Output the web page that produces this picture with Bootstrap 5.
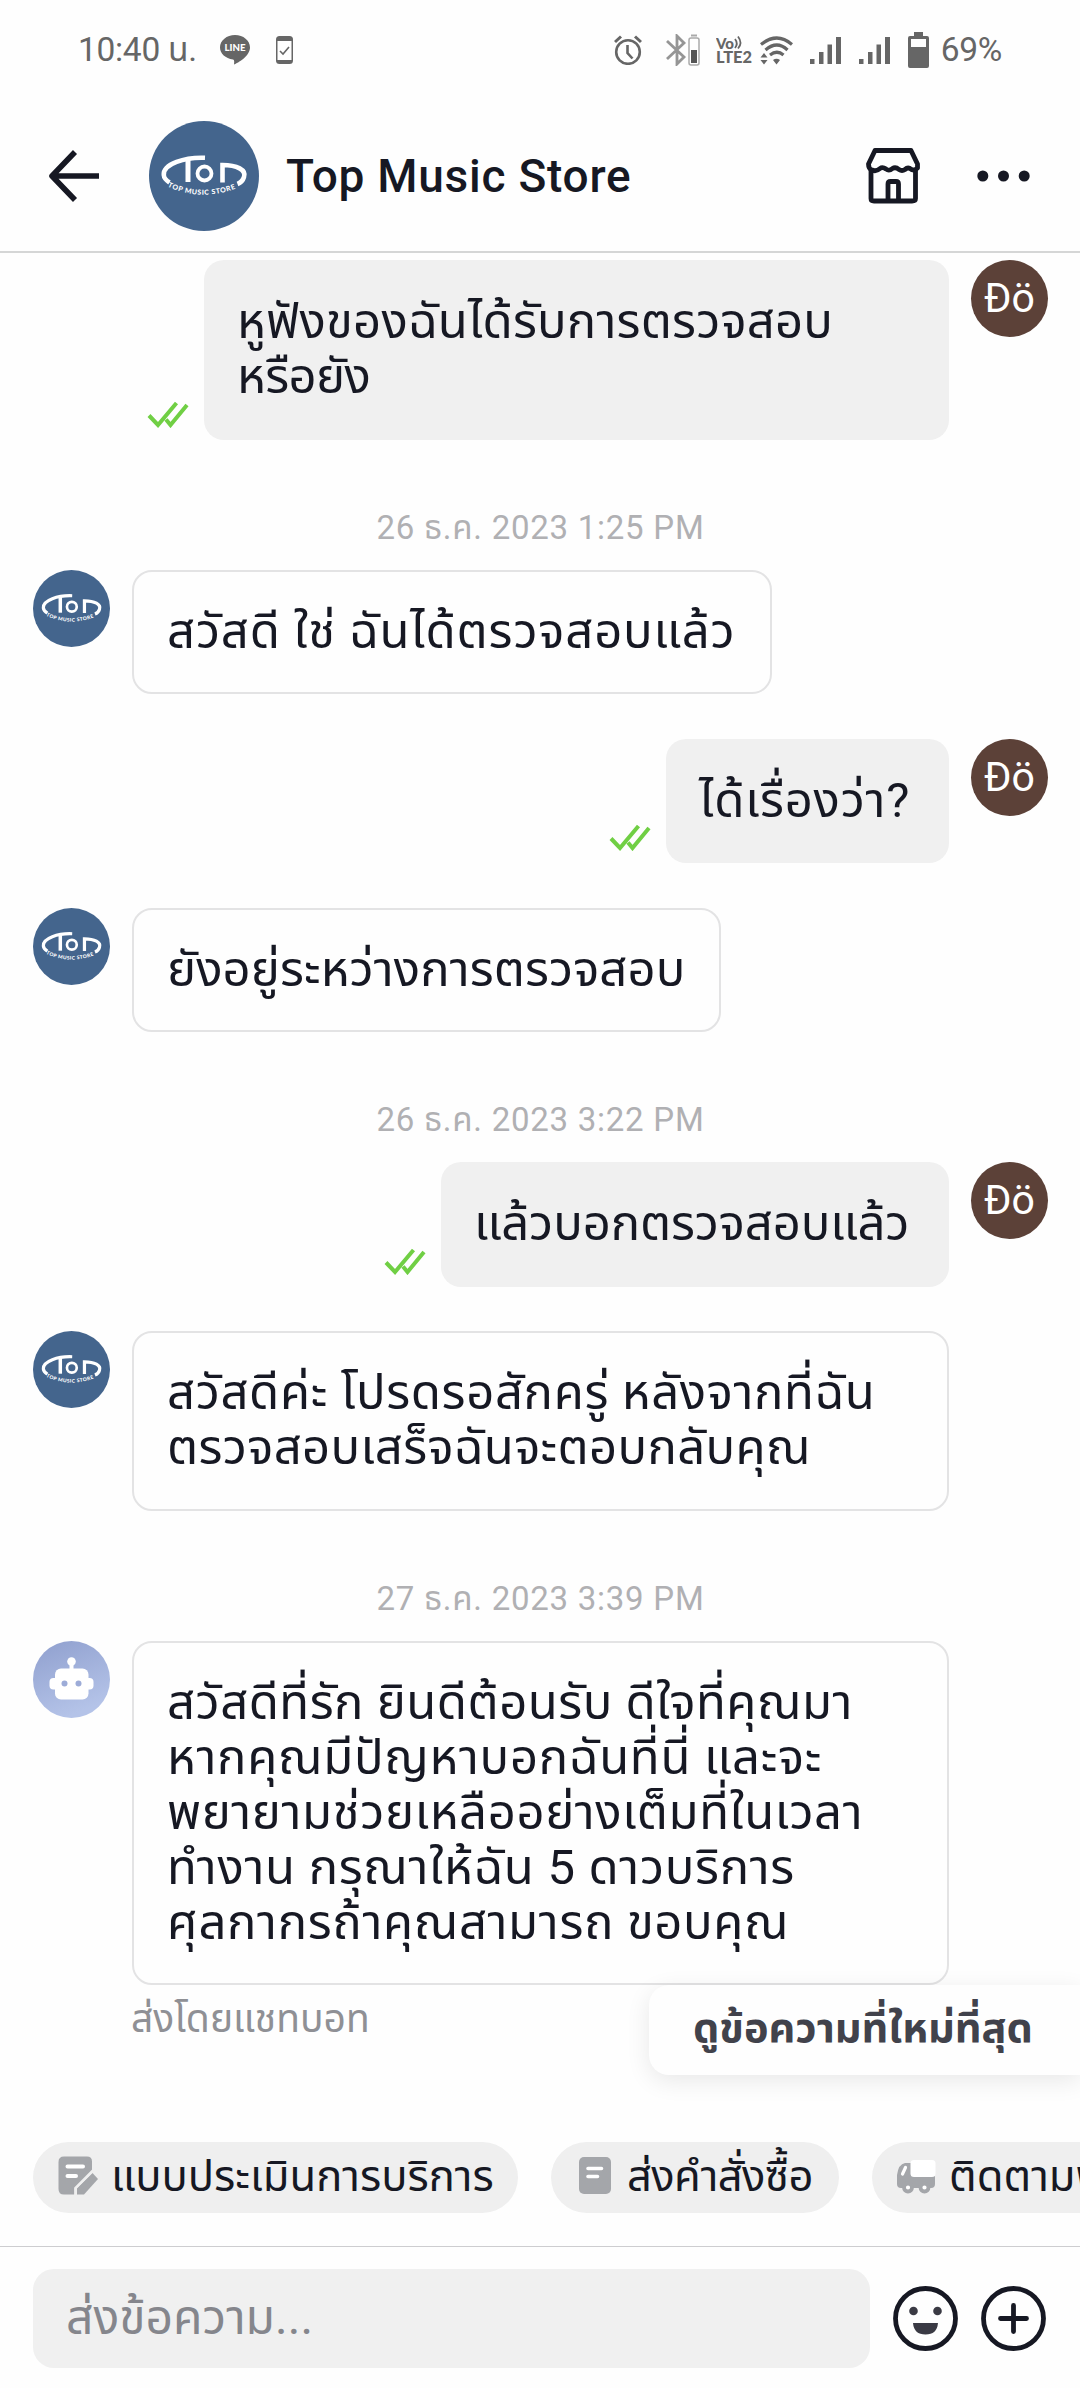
<!DOCTYPE html>
<html lang="th">
<head>
<meta charset="utf-8">
<meta name="viewport" content="width=device-width, initial-scale=1">
<title>Top Music Store</title>
<link href="https://cdn.jsdelivr.net/npm/bootstrap@5.3.0/dist/css/bootstrap.min.css" rel="stylesheet">
<style>
body{font-family:Roboto,"Noto Sans","Noto Sans Thai",sans-serif;color:#161823;background:#fefefe;width:1080px;height:2388px;overflow:hidden}
svg{display:block;flex:none}
.statusbar{height:100px;padding:0 78px;color:#666;font-size:33.5px}
.clock{line-height:40px;letter-spacing:-.3px}
.chat-head{height:153px;padding:0 50px 0 49px;border-bottom:2px solid #d5d6d6}
.shop-name{font-size:46px;font-weight:500;line-height:60px;letter-spacing:.75px}
.thread{padding:7px 32px 0 33px;height:1855px}
.msg{margin-bottom:44.5px}
.bubble{border-radius:20px;padding:34px 33px 35.5px 33px;font-size:49px;line-height:55px}
.bubble.theirs{border:2px solid #e3e3e4;padding:32px 31px 33.500px 33px;margin-left:22px;background:#fefefe}
.bubble.mine{background:#f0f0f0;margin-right:22px}
.wide{width:817px}
.seen{margin:0 15px 12px 0}
.ln{display:block;width:max-content;white-space:nowrap}
.ava-me{width:77px;height:77px;background:#5c4138;color:#fff;font-size:41px;line-height:77px}
.stamp{color:#b0b0b3;font-size:33px;line-height:44px;letter-spacing:.75px;margin-top:66px;margin-bottom:20px}
.botnote{color:#8f9095;font-size:39px;line-height:44px;margin:12px 0 0 98px}
.newest{right:0;top:1985px;width:431px;height:90px;border-radius:20px 0 0 20px;background:#fefefe;color:#41424b;font-size:41.500px;font-weight:700;line-height:86px;padding-left:44px;box-shadow:0 6px 24px rgba(0,0,0,.09)}
.quick{height:139px;padding:34px 0 0 33px;gap:33px;border-bottom:1px solid #cdcdd0;overflow:hidden}
.chip{height:71px;border-radius:36px;background:#efefef;font-size:43.500px;line-height:69px;padding:0 22px 0 25px;flex:none}
.chip svg{margin:14px 13px 0 0}
.composer{padding:22px 33px 0 33px}
.field{width:839px;height:99px;border-radius:21px;background:#f0f0f0;color:#85868c;font-size:48px;line-height:98px;padding-left:33px}
</style>
</head>
<body class="d-flex flex-column position-relative">
<svg width="0" height="0" class="position-absolute">
<defs>
<path id="logoArc" d="M18.500 65.500 Q54 82 92 65.500"/>
<symbol id="logo" viewBox="0 0 110 110">
<circle cx="55" cy="55" r="55" fill="#44658d"/>
<g fill="none" stroke="#fff" stroke-width="4.600">
<path d="M56 36.800 C36 36 14 43 14.800 54 Q15 58 20.500 61.500"/><path d="M39 38 V61" stroke-width="5"/>
<circle cx="55.500" cy="52.500" r="7" stroke-width="3.800"/>
<path d="M73.500 61.500 V44 C88 44 97.500 49 95 56 Q93.500 61 88.500 63"/>
</g>
<text font-family="Lato" font-weight="900" font-size="7" fill="#fff"><textPath href="#logoArc" textLength="70">TOP MUSIC STORE</textPath></text>
</symbol>
<symbol id="ticks" viewBox="0 0 42 27"><path d="M2 14.500 L11 24 L29.500 2 M19 18.500 L23.500 24 L40 4" fill="none" stroke="#70cf44" stroke-width="4"/></symbol>
<symbol id="bars" viewBox="0 0 31 28"><path d="M0 23h4.500v5H0zM9 16h4.500v12H9zM17.500 8.500h4.500v19.500h-4.500zM26 1h5v27h-5z" fill="#666"/></symbol>
</defs>
</svg>

<div class="statusbar d-flex align-items-center">
  <span class="clock ln">10:40 น.</span>
  <svg style="margin-left:23px" width="30" height="30" viewBox="0 0 30 30"><path d="M15 0C6.700 0 0 5.500 0 12.500 0 18.500 5.500 23.500 13 24.600 14.500 25 14.300 27 14 29.500 18 28 30 21 30 12.500 30 5.500 23.300 0 15 0z" fill="#666"/><text x="4.500" y="16.200" font-family="Lato" font-weight="900" font-size="9.500" fill="#fff" textLength="21" lengthAdjust="spacingAndGlyphs">LINE</text></svg>
  <svg style="margin-left:26px" width="17" height="28" viewBox="0 0 17 28"><rect width="17" height="28" rx="3.500" fill="#666"/><rect x="1.500" y="5" width="14" height="19" fill="#fefefe"/><path d="M4 15l3 3 6-7" fill="none" stroke="#666" stroke-width="1.600"/></svg>
  <div class="d-flex align-items-center ms-auto">
  <svg width="28" height="30" viewBox="0 0 28 30"><g fill="none" stroke="#666" stroke-width="2.600"><circle cx="14" cy="17" r="11.800"/><path d="M1 7l6-5.500M27 7l-6-5.500" stroke-width="3"/><path d="M13.500 10v8l5 5.500"/></g></svg>
  <svg style="margin-left:24px" width="34" height="32" viewBox="0 0 34 32"><path d="M1 7l17 16-7 7V2l7 7L1 25" fill="none" stroke="#959595" stroke-width="2.800"/><rect x="23" y="4" width="10" height="27" rx="2" fill="none" stroke="#aaa" stroke-width="1.500"/><path d="M25 1.500h6" stroke="#aaa" stroke-width="2"/><path d="M25 16h6v13h-6z" fill="#555"/></svg>
  <svg style="margin-left:16px" width="37" height="32" viewBox="0 0 37 32" fill="#666" font-family="Lato" font-weight="900"><text x="0" y="14.500" font-size="15.500" textLength="18" lengthAdjust="spacingAndGlyphs">Vo</text><path d="M19 5q3.500 4.500 0 9M22 2.500q5 6.500 0 12" fill="none" stroke="#666" stroke-width="1.800"/><text x="0" y="29" font-size="16" textLength="36" lengthAdjust="spacingAndGlyphs">LTE2</text></svg>
  <svg style="margin-left:7px" width="33" height="29" viewBox="0 0 33 29"><g fill="none" stroke="#666" stroke-width="3.200"><path d="M1 8.500Q17-4.500 32 8.500M5.500 14Q17 4 27.500 14M10 19Q17 13.500 23.500 19"/></g><path d="M13 24q3.500-2.500 7 0L16.500 28.500zM0.500 21.500L4 17l3.500 4.500zM0.500 24h7L4 28.500z" fill="#666"/></svg>
  <svg style="margin-left:17px" width="31" height="28"><use href="#bars"/></svg>
  <svg style="margin-left:18px" width="31" height="28"><use href="#bars"/></svg>
  <svg style="margin-left:18px" width="21" height="36" viewBox="0 0 21 36"><path d="M6 0h9v4h4q2 0 2 2v28q0 2-2 2H2q-2 0-2-2V6q0-2 2-2h4z" fill="#666"/><path d="M3 7h15v8H3z" fill="#fefefe"/></svg>
  <span class="clock ln" style="margin-left:12px">69%</span>
  </div>
</div>

<header class="chat-head d-flex align-items-center">
  <svg width="50" height="52" viewBox="0 0 50 52"><path d="M26 2L3 26l23 24M3 26h47" fill="none" stroke="#161823" stroke-width="5.600" stroke-linejoin="round"/></svg>
  <svg style="margin-left:50px" width="110" height="110"><use href="#logo"/></svg>
  <span class="shop-name ln" style="margin-left:27px">Top Music Store</span>
  <svg class="ms-auto" width="54" height="56" viewBox="0 0 54 56"><g fill="none" stroke="#161823" stroke-width="4.800" stroke-linejoin="round"><path d="M9 2.500H45L51.500 16V20Q49 23 45.500 21.500 42 18.500 39 21.500 36 23.500 33 21.500 29.500 18.500 26.500 20.500 23 23.500 20 21 16.500 18.500 14 20.500 10 24 6 22 2.500 21 2.500 16z"/><path d="M5 22V50.500Q5 53 8 53H46Q49.500 53 49.500 50.500V22M22 53V36Q22 33.500 24.500 33.500H30Q32.500 33.500 32.500 36V53"/></g></svg>
  <svg style="margin-left:57px" width="53" height="12" viewBox="0 0 53 12" fill="#161823"><circle cx="5.800" cy="6" r="5.500"/><circle cx="26.500" cy="6" r="5.500"/><circle cx="47.200" cy="6" r="5.500"/></svg>
</header>

<main class="thread">
  <div class="msg d-flex justify-content-end align-items-end">
    <svg class="seen" width="42" height="27"><use href="#ticks"/></svg>
    <div class="bubble mine" style="width:745px"><span class="ln" style="letter-spacing:.2px">หูฟังของฉันได้รับการตรวจสอบ</span><span class="ln" style="letter-spacing:-.6px">หรือยัง</span></div>
    <div class="ava-me rounded-circle text-center align-self-start">Đö</div>
  </div>
  <div class="stamp d-flex justify-content-center"><span class="ln">26 ธ.ค. 2023 1:25 PM</span></div>
  <div class="msg d-flex align-items-start">
    <svg width="77" height="77"><use href="#logo"/></svg>
    <div class="bubble theirs" style="width:640px"><span class="ln" style="letter-spacing:.85px">สวัสดี ใช่ ฉันได้ตรวจสอบแล้ว</span></div>
  </div>
  <div class="msg d-flex justify-content-end align-items-end">
    <svg class="seen" width="42" height="27"><use href="#ticks"/></svg>
    <div class="bubble mine" style="width:283px"><span class="ln" style="letter-spacing:.8px">ได้เรื่องว่า?</span></div>
    <div class="ava-me rounded-circle text-center align-self-start">Đö</div>
  </div>
  <div class="msg d-flex align-items-start">
    <svg width="77" height="77"><use href="#logo"/></svg>
    <div class="bubble theirs" style="width:589px"><span class="ln" style="letter-spacing:.1px">ยังอยู่ระหว่างการตรวจสอบ</span></div>
  </div>
  <div class="stamp d-flex justify-content-center"><span class="ln">26 ธ.ค. 2023 3:22 PM</span></div>
  <div class="msg d-flex justify-content-end align-items-end">
    <svg class="seen" width="42" height="27"><use href="#ticks"/></svg>
    <div class="bubble mine" style="width:508px"><span class="ln" style="letter-spacing:-.1px">แล้วบอกตรวจสอบแล้ว</span></div>
    <div class="ava-me rounded-circle text-center align-self-start">Đö</div>
  </div>
  <div class="msg d-flex align-items-start">
    <svg width="77" height="77"><use href="#logo"/></svg>
    <div class="bubble theirs wide"><span class="ln" style="letter-spacing:.65px">สวัสดีค่ะ โปรดรอสักครู่ หลังจากที่ฉัน</span><span class="ln" style="letter-spacing:.35px">ตรวจสอบเสร็จฉันจะตอบกลับคุณ</span></div>
  </div>
  <div class="stamp d-flex justify-content-center"><span class="ln">27 ธ.ค. 2023 3:39 PM</span></div>
  <div class="msg d-flex align-items-start mb-0">
    <svg width="77" height="77" viewBox="0 0 77 77"><defs><linearGradient id="bot" x1="0" y1="0" x2=".4" y2="1"><stop stop-color="#8f9fce"/><stop offset="1" stop-color="#b4c3e8"/></linearGradient></defs><circle cx="38.500" cy="38.500" r="38.500" fill="url(#bot)"/><g fill="#fff"><circle cx="38.500" cy="20.500" r="4.300"/><rect x="36.500" y="21" width="4" height="10"/><rect x="22" y="27.500" width="33.500" height="31" rx="6"/><rect x="16.500" y="37" width="44" height="11.500" rx="4"/></g><circle cx="31.500" cy="42.500" r="3" fill="#9dacd8"/><circle cx="45.500" cy="42.500" r="3" fill="#9dacd8"/></svg>
    <div class="bubble theirs wide"><span class="ln" style="letter-spacing:.5px">สวัสดีที่รัก ยินดีต้อนรับ ดีใจที่คุณมา</span><span class="ln" style="letter-spacing:.7px">หากคุณมีปัญหาบอกฉันที่นี่ และจะ</span><span class="ln" style="letter-spacing:.6px">พยายามช่วยเหลืออย่างเต็มที่ในเวลา</span><span class="ln" style="letter-spacing:.7px">ทำงาน กรุณาให้ฉัน 5 ดาวบริการ</span><span class="ln" style="letter-spacing:.65px">ศุลกากรถ้าคุณสามารถ ขอบคุณ</span></div>
  </div>
  <div class="botnote"><span class="ln">ส่งโดยแชทบอท</span></div>
</main>
<div class="newest position-absolute"><span class="ln">ดูข้อความที่ใหม่ที่สุด</span></div>

<div class="quick d-flex">
  <div class="chip d-flex" style="width:485px">
    <svg width="40" height="40" viewBox="0 0 40 40"><path d="M6 .5H29Q34 .5 34 5.500V16L16.500 32V38.500H6Q.5 38.500 .5 33V6Q.5 .5 6 .5z" fill="#a4a6aa"/><path d="M19 38.500V32L34.500 17L40 23L26 38.500z" fill="#a4a6aa"/><path d="M17.500 40V32L35 14.500" fill="none" stroke="#efefef" stroke-width="2.500"/><path d="M9.500 10.500H25M9.500 20H18" stroke="#fff" stroke-width="4" stroke-linecap="round"/></svg>
    <span class="ln">แบบประเมินการบริการ</span></div>
  <div class="chip d-flex" style="width:288px">
    <svg width="38" height="40" viewBox="0 0 38 40"><rect x="3" y="1" width="32" height="37" rx="5" fill="#a4a6aa"/><path d="M12 12.500H25.500M12 20.500H21.500" stroke="#fff" stroke-width="3.600" stroke-linecap="round"/></svg>
    <span class="ln" style="letter-spacing:-.6px">ส่งคำสั่งซื้อ</span></div>
  <div class="chip d-flex">
    <svg width="39" height="40" viewBox="0 0 39 40"><path d="M8 7H14V20H38V28Q38 32 34 32H4Q0 32 0 28V19Q1.500 8 8 7z" fill="#a4a6aa"/><rect x="13.500" y="4" width="25" height="17" rx="3.500" fill="#fff"/><path d="M5.500 18L8.500 11.500" stroke="#fff" stroke-width="3.200" stroke-linecap="round"/><g fill="#fff" stroke="#a4a6aa" stroke-width="3.800"><circle cx="11" cy="31.500" r="4"/><circle cx="27.500" cy="31.500" r="4"/></g></svg>
    <span class="ln">ติดตามพัสดุ</span></div>
</div>
<footer class="composer d-flex align-items-center">
  <div class="field"><span class="ln">ส่งข้อความ...</span></div>
  <svg style="margin-left:22px" width="67" height="67" viewBox="0 0 67 67"><circle cx="33.500" cy="33.500" r="30" fill="none" stroke="#161823" stroke-width="4.800"/><g fill="#3a3a44"><circle cx="21.500" cy="26" r="4.300"/><circle cx="45.500" cy="26" r="4.300"/><path d="M21 38H46Q45 49.500 33.500 49.500T21 38z"/></g></svg>
  <svg style="margin-left:21px" width="67" height="67" viewBox="0 0 67 67"><g fill="none" stroke="#161823" stroke-width="4.800" stroke-linecap="round"><circle cx="33.500" cy="33.500" r="30"/><path d="M33.500 20.500V46.500M20.500 33.500H46.500"/></g></svg>
</footer>
<script src="https://cdn.jsdelivr.net/npm/bootstrap@5.3.0/dist/js/bootstrap.bundle.min.js"></script>
</body>
</html>
